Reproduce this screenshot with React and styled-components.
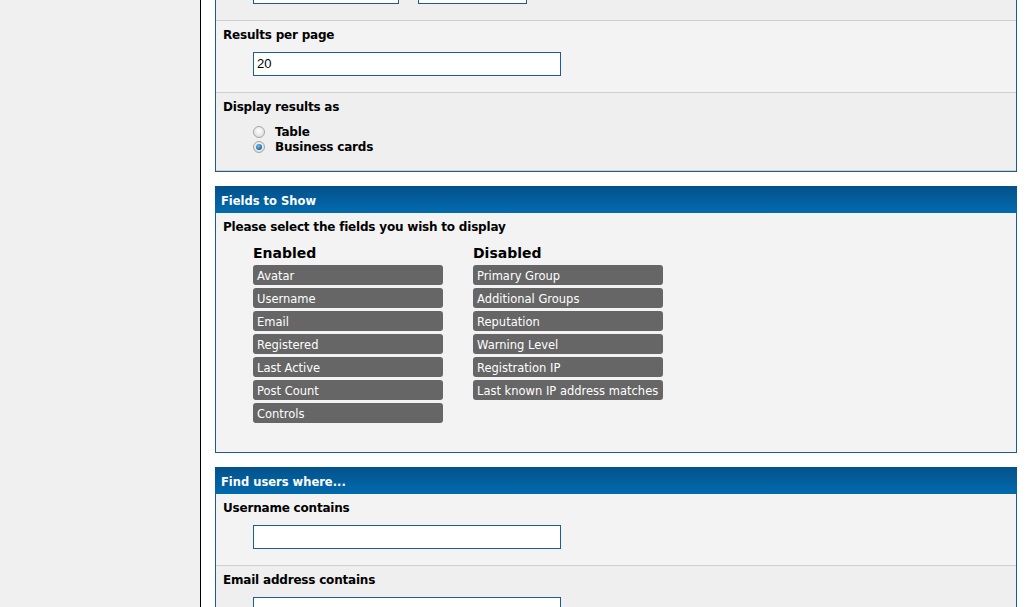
import React from 'react';
import styled, { createGlobalStyle } from 'styled-components';

const Global = createGlobalStyle`
  html, body {
    margin: 0;
    padding: 0;
    background: #fff;
    font-family: "DejaVu Sans", Verdana, sans-serif;
    color: #000;
  }
`;

const Page = styled.div`
  display: flex;
  height: 607px;
  overflow: hidden;
`;

const Sidebar = styled.div`
  width: 200px;
  flex: none;
  background: #f0f0f0;
  border-right: 1px solid #000;
`;

const Main = styled.div`
  flex: 1;
  padding: 0 15px 0 14px;
  display: flex;
  flex-direction: column;
  gap: 14px;
`;

const Panel = styled.div`
  border: 1px solid #1a5d8e;
  margin-top: ${p => p.$offset || 0}px;
  flex: none;
`;

const Header = styled.div`
  height: 27px;
  line-height: 30px;
  background: linear-gradient(to bottom, #03518a, #026bae);
  color: #fff;
  font-weight: bold;
  font-size: 11.5px;
  margin: -1px -1px 0;
  padding-left: 6px;
`;

const Row = styled.div`
  padding: 7px 7px 16px;
  background: ${p => (p.$alt ? '#efefef' : '#f3f3f3')};
  border-bottom: 1px solid #d0d0d0;
`;

const Label = styled.div`
  font-weight: bold;
  font-size: 12px;
  letter-spacing: -0.2px;
  line-height: 15px;
`;

const Indent = styled.div`
  margin: 9px 0 0 30px;
  display: flex;
  gap: 19px;
`;

const TextBox = styled.div`
  box-sizing: border-box;
  width: ${p => p.$w || 308}px;
  height: 24px;
  border: 1px solid #1a5d8e;
  background: #fff;
  font-family: "Liberation Sans", Arial, sans-serif;
  font-size: 13px;
  line-height: 22px;
  padding-left: 3px;
`;

const Options = styled.div`
  margin: 9px 0 0 30px;
`;

const Option = styled.label`
  display: flex;
  align-items: center;
  height: 15px;
  font-weight: bold;
  font-size: 12px;
  letter-spacing: -0.2px;
  gap: 10px;
`;

const Radio = styled.span`
  box-sizing: border-box;
  width: 12px;
  height: 12px;
  border-radius: 50%;
  border: 1px solid #a4a4a4;
  background: radial-gradient(circle at 50% 40%, #fff 0%, #e2e2e2 70%, #cfcfcf 100%);
  display: flex;
  align-items: center;
  justify-content: center;
  &::after {
    content: '';
    display: ${p => (p.$checked ? 'block' : 'none')};
    width: 6px;
    height: 6px;
    border-radius: 50%;
    background: radial-gradient(circle at 40% 35%, #6fc3f0, #0a5d98 80%);
  }
`;

const Body = styled.div`
  background: #f3f3f3;
  padding: 7px 7px 29px;
`;

const Columns = styled.div`
  display: flex;
  gap: 30px;
  margin: 9px 0 0 30px;
`;

const Column = styled.div`
  width: 190px;
  display: flex;
  flex-direction: column;
  gap: 3px;
`;

const ColumnTitle = styled.div`
  font-weight: bold;
  font-size: 14px;
  line-height: 18px;
`;

const Field = styled.div`
  height: 20px;
  line-height: 23px;
  background: #666;
  color: #fff;
  border-radius: 3px;
  font-size: 11.5px;
  padding-left: 4px;
  white-space: nowrap;
`;

const enabled = ['Avatar', 'Username', 'Email', 'Registered', 'Last Active', 'Post Count', 'Controls'];
const disabled = ['Primary Group', 'Additional Groups', 'Reputation', 'Warning Level', 'Registration IP', 'Last known IP address matches'];

export default function App() {
  return (
    <Page>
      <Global />
      <Sidebar />
      <Main>
        <Panel $offset={-52}>
          <Row $alt>
            <Label aria-hidden="true">&nbsp;</Label>
            <Indent>
              <TextBox $w={146} />
              <TextBox $w={109} />
            </Indent>
          </Row>
          <Row>
            <Label>Results per page</Label>
            <Indent>
              <TextBox>20</TextBox>
            </Indent>
          </Row>
          <Row $alt>
            <Label>Display results as</Label>
            <Options>
              <Option><Radio />Table</Option>
              <Option><Radio $checked />Business cards</Option>
            </Options>
          </Row>
        </Panel>

        <Panel>
          <Header>Fields to Show</Header>
          <Body>
            <Label>Please select the fields you wish to display</Label>
            <Columns>
              <Column>
                <ColumnTitle>Enabled</ColumnTitle>
                {enabled.map(f => <Field key={f}>{f}</Field>)}
              </Column>
              <Column>
                <ColumnTitle>Disabled</ColumnTitle>
                {disabled.map(f => <Field key={f}>{f}</Field>)}
              </Column>
            </Columns>
          </Body>
        </Panel>

        <Panel>
          <Header>Find users where...</Header>
          <Row>
            <Label>Username contains</Label>
            <Indent>
              <TextBox />
            </Indent>
          </Row>
          <Row $alt>
            <Label>Email address contains</Label>
            <Indent>
              <TextBox />
            </Indent>
          </Row>
        </Panel>
      </Main>
    </Page>
  );
}
